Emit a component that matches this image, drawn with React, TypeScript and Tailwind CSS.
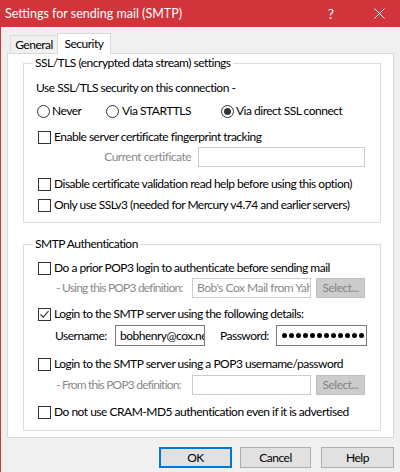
import React from "react"

const font = "font-['Lato',sans-serif] text-[12px] leading-[16px] tracking-[-0.5px]"

function Checkbox({ checked }: { checked?: boolean }) {
    return (
        <span className="w-[13px] h-[13px] border border-[#333333] bg-white flex items-center justify-center shrink-0">
            {checked && (
                <svg width="11" height="11" viewBox="0 0 11 11">
                    <path d="M1.5 5.5 L4.2 8.2 L9.5 2.2" stroke="#333333" strokeWidth="1.1" fill="none" />
                </svg>
            )}
        </span>
    )
}

function Radio({ checked }: { checked?: boolean }) {
    return (
        <span className="w-[13px] h-[13px] rounded-full border border-[#333333] bg-white flex items-center justify-center shrink-0">
            {checked && <span className="w-[7px] h-[7px] rounded-full bg-[#333333]" />}
        </span>
    )
}

function CheckRow({ label, checked, className }: { label: string; checked?: boolean; className?: string }) {
    return (
        <div className={"flex items-center h-[20px] pl-[14px] gap-[3px] whitespace-nowrap " + (className ?? "")}>
            <Checkbox checked={checked} />
            <span>{label}</span>
        </div>
    )
}

function SelectBtn() {
    return (
        <div className="ml-[5px] w-[49px] h-[20px] bg-[#cccccc] border border-[#bfbfbf] text-[#838383] flex items-center justify-center">
            Select...
        </div>
    )
}

function Group({ title, className, children }: { title: string; className?: string; children: React.ReactNode }) {
    return (
        <div className={"relative border border-[#dcdcdc] " + (className ?? "")}>
            <span className="absolute left-[9px] -top-[9px] bg-white px-[2px] whitespace-nowrap">{title}</span>
            {children}
        </div>
    )
}

export default function App() {
    return (
        <div className={"w-[400px] h-[472px] flex flex-col bg-[#f0f0f0] border-l border-[#d1343b] text-black " + font}>

            {/* title bar */}
            <div className="h-[27px] bg-[#d1343b] text-white flex items-center pl-[4px] shrink-0 tracking-normal">
                <span className="text-[12.5px]">Settings for sending mail (SMTP)</span>
                <span className="ml-auto mr-[40px] text-[14px]">?</span>
                <svg width="11" height="11" viewBox="0 0 11 11" className="mr-[15px]">
                    <path d="M0.5 0.5 L10.5 10.5 M10.5 0.5 L0.5 10.5" stroke="white" strokeWidth="1" />
                </svg>
            </div>

            {/* tabs */}
            <div className="flex items-end pl-[9px] pt-[6px] h-[26px] shrink-0">
                <div className="w-[47px] h-[18px] border-t border-l border-[#d9d9d9] bg-[#f0f0f0] flex items-center justify-center">General</div>
                <div className="relative z-10 w-[54px] h-[21px] -mb-[1px] border-t border-l border-r border-[#d9d9d9] bg-white flex items-center justify-center">Security</div>
            </div>

            {/* panel */}
            <div className="ml-[6px] w-[387px] h-[385px] border border-[#d9d9d9] bg-white pt-[9px] pl-[15px] pr-[12px] shrink-0">
                <Group title="SSL/TLS (encrypted data stream) settings" className="pt-[14px] pb-[7px]">
                    <div className="h-[20px] flex items-center pl-[12px]">Use SSL/TLS security on this connection -</div>
                    <div className="h-[20px] mt-[3px] flex items-center pl-[13px] whitespace-nowrap">
                        <Radio />
                        <span className="ml-[2px] w-[54px]">Never</span>
                        <Radio />
                        <span className="ml-[3px] w-[99px]">Via STARTTLS</span>
                        <Radio checked />
                        <span className="ml-[2px]">Via direct SSL connect</span>
                    </div>
                    <CheckRow className="mt-[6px]" label="Enable server certificate fingerprint tracking" />
                    <div className="h-[20px] flex items-center">
                        <span className="w-[167px] text-right text-[#8a8a8a]">Current certificate</span>
                        <div className="ml-[7px] w-[167px] h-[20px] border border-[#cccccc] bg-white" />
                    </div>
                    <CheckRow className="mt-[7px]" label="Disable certificate validation read help before using this option)" />
                    <CheckRow className="mt-[1px]" label="Only use SSLv3 (needed for Mercury v4.74 and earlier servers)" />
                </Group>

                <Group title="SMTP Authentication" className="mt-[21px] pt-[13px] pb-[8px]">
                    <CheckRow label="Do a prior POP3 login to authenticate before sending mail" />
                    <div className="h-[20px] flex items-center pl-[32px] whitespace-nowrap">
                        <span className="w-[136px] shrink-0 text-[#8a8a8a] tracking-[-0.8px]">- Using this POP3 definition:</span>
                        <div className="w-[119px] h-[20px] shrink-0 border border-[#cccccc] bg-white text-[#8a8a8a] pl-[4px] overflow-hidden flex items-center">Bob's Cox Mail from Yahoo</div>
                        <SelectBtn />
                    </div>
                    <CheckRow className="mt-[6px]" checked label="Login to the SMTP server using the following details:" />
                    <div className="h-[21px] mt-[1px] flex items-center pl-[31px] whitespace-nowrap">
                        <span className="w-[60px] shrink-0">Username:</span>
                        <div className="w-[90px] h-[21px] shrink-0 border border-[#7a7a7a] bg-white pl-[4px] overflow-hidden flex items-center">bobhenry@cox.net</div>
                        <span className="ml-[15px] w-[56px] shrink-0">Password:</span>
                        <div className="w-[91px] h-[21px] shrink-0 border border-[#7a7a7a] bg-white pl-[5px] overflow-hidden flex items-center gap-[2px]">
                            {Array.from({ length: 13 }).map((_, i) => (
                                <span key={i} className="w-[5px] h-[5px] rounded-full bg-black shrink-0" />
                            ))}
                        </div>
                    </div>
                    <CheckRow className="mt-[8px]" label="Login to the SMTP server using a POP3 username/password" />
                    <div className="h-[20px] mt-[1px] flex items-center pl-[32px] whitespace-nowrap">
                        <span className="w-[136px] shrink-0 text-[#8a8a8a] tracking-[-0.8px]">- From this POP3 definition:</span>
                        <div className="w-[119px] h-[20px] shrink-0 border border-[#cccccc] bg-white" />
                        <SelectBtn />
                    </div>
                    <CheckRow className="mt-[7px]" label="Do not use CRAM-MD5 authentication even if it is advertised" />
                </Group>
            </div>

            {/* buttons */}
            <div className="flex mt-[9px] pl-[158px] shrink-0">
                <button className="w-[73px] h-[21px] bg-[#e1e1e1] border-2 border-[#0078d7]">OK</button>
                <button className="ml-[8px] w-[71px] h-[21px] bg-[#e1e1e1] border border-[#adadad]">Cancel</button>
                <button className="ml-[10px] w-[73px] h-[21px] bg-[#e1e1e1] border border-[#adadad]">Help</button>
            </div>
        </div>
    )
}
